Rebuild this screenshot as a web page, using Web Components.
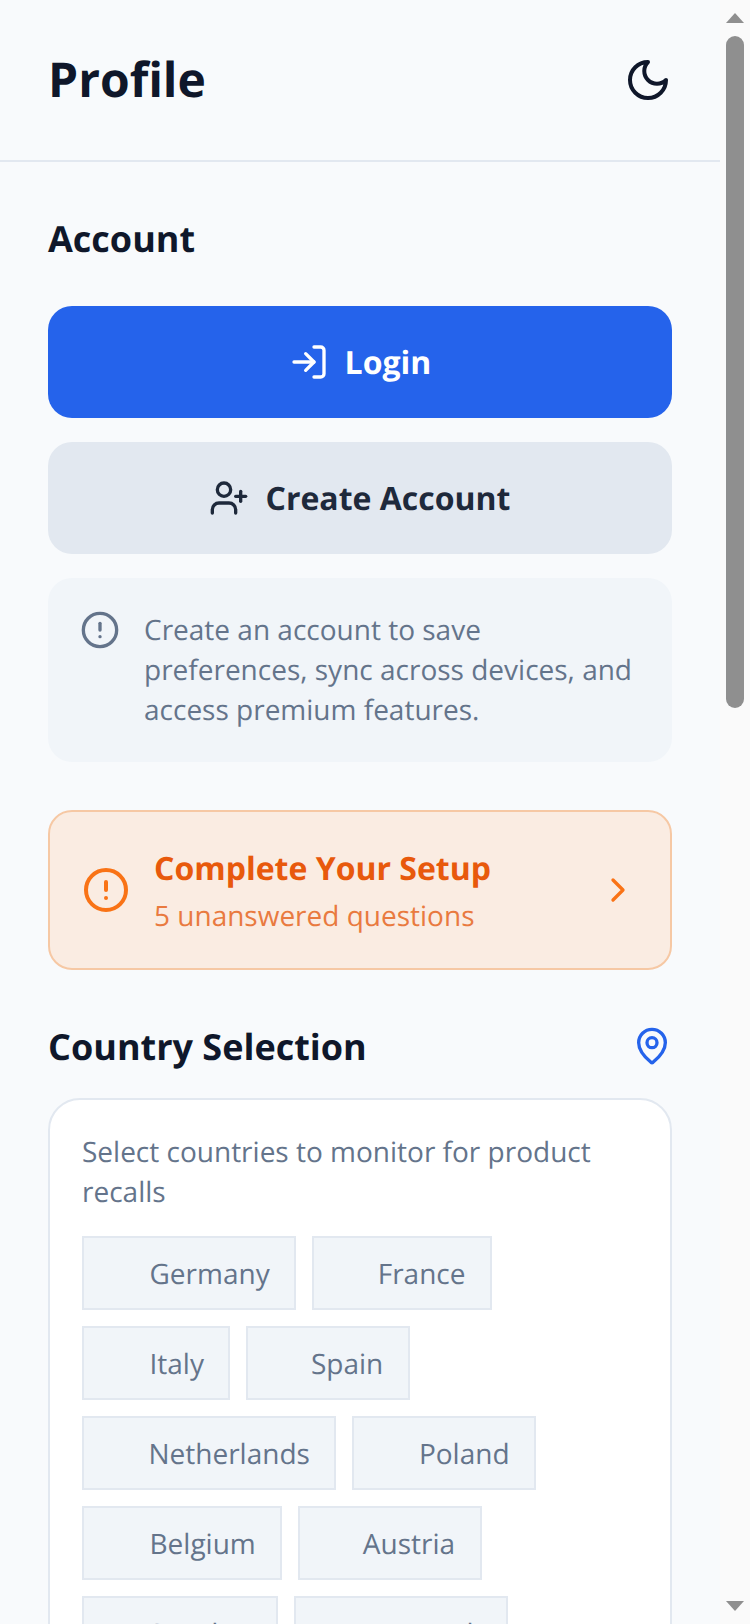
<!DOCTYPE html>
<html>
<head>
<meta charset="utf-8">
<title>Profile</title>
<style>
  html, body { margin: 0; height: 100%; overflow: hidden; }
  body { font-family: "Open Sans", "Liberation Sans", sans-serif; background: #f8fafc; text-rendering: geometricPrecision; }
</style>
</head>
<body>
<app-shell>
  <app-header title="Profile"></app-header>
  <section-title>Account</section-title>
  <action-button kind="primary" icon="login">Login</action-button>
  <action-button kind="secondary" icon="user-plus">Create Account</action-button>
  <info-note>Create an account to save preferences, sync across devices, and access premium features.</info-note>
  <setup-banner heading="Complete Your Setup" sub="5 unanswered questions"></setup-banner>
  <section-title pin>Country Selection</section-title>
  <country-card hint="Select countries to monitor for product recalls">
    <country-chip flag="65.5">Germany</country-chip>
    <country-chip flag="63.5">France</country-chip>
    <country-chip flag="65.5">Italy</country-chip>
    <country-chip flag="62.5">Spain</country-chip>
    <country-chip flag="64.5">Netherlands</country-chip>
    <country-chip flag="64.5">Poland</country-chip>
    <country-chip flag="65.5">Belgium</country-chip>
    <country-chip flag="62.5">Austria</country-chip>
    <country-chip flag="64.5">Sweden</country-chip>
    <country-chip flag="64.5">Denmark</country-chip>
  </country-card>
</app-shell>

<script>
const ICONS = {
  login: '<path d="M15 3h4a2 2 0 0 1 2 2v14a2 2 0 0 1-2 2h-4"/><polyline points="10 17 15 12 10 7"/><line x1="15" y1="12" x2="3" y2="12"/>',
  'user-plus': '<path d="M16 21v-2a4 4 0 0 0-4-4H6a4 4 0 0 0-4 4v2"/><circle cx="9" cy="7" r="4"/><line x1="19" y1="8" x2="19" y2="14"/><line x1="22" y1="11" x2="16" y2="11"/>',
  alert: '<circle cx="12" cy="12" r="10"/><line x1="12" y1="8" x2="12" y2="12"/><line x1="12" y1="16" x2="12.01" y2="16"/>',
  moon: '<path d="M12 3a6 6 0 0 0 9 9 9 9 0 1 1-9-9Z"/>',
  chevron: '<path d="m9 18 6-6-6-6"/>',
  pin: '<path d="M20 10c0 5-5.5 10.2-7.4 11.8a1 1 0 0 1-1.2 0C9.5 20.2 4 15 4 10a8 8 0 0 1 16 0"/><circle cx="12" cy="10" r="3"/>'
};

function icon(name, size) {
  return `<svg width="${size}" height="${size}" viewBox="0 0 24 24" fill="none" stroke="currentColor" stroke-width="2" stroke-linecap="round" stroke-linejoin="round">${ICONS[name]}</svg>`;
}

class AppShell extends HTMLElement {
  constructor() {
    super();
    this.attachShadow({ mode: 'open' });
  }

  connectedCallback() {
    this.shadowRoot.innerHTML = `
      <style>
        :host { display: flex; height: 100%; }
        .page { flex: 1; min-width: 0; overflow: hidden; }
        .bar {
          width: 30px;
          flex: none;
          background: #fafafa;
          display: flex;
          flex-direction: column;
          align-items: center;
          padding: 13px 0;
          box-sizing: border-box;
        }
        .tri { width: 18px; height: 10px; background: #8f8f8f; flex: none; }
        .up { clip-path: polygon(50% 0, 100% 100%, 0 100%); }
        .down { clip-path: polygon(0 0, 100% 0, 50% 100%); margin-top: auto; }
        .thumb { width: 18px; height: 672px; margin-top: 13px; background: #8f8f8f; border-radius: 9px; flex: none; }
      </style>
      <div class="page"><slot></slot></div>
      <div class="bar">
        <div class="tri up"></div>
        <div class="thumb"></div>
        <div class="tri down"></div>
      </div>
    `;
  }
}

class AppHeader extends HTMLElement {
  constructor() {
    super();
    this.attachShadow({ mode: 'open' });
  }

  connectedCallback() {
    this.shadowRoot.innerHTML = `
      <style>
        :host { display: block; }
        .head {
          height: 160px;
          box-sizing: content-box;
          border-bottom: 2px solid #e2e8f0;
          padding: 0 48px;
          display: flex;
          align-items: center;
          justify-content: space-between;
        }
        h1 { margin: 0; font-size: 48px; line-height: 64px; font-weight: 700; color: #0f172a; }
        svg { display: block; color: #0f172a; }
      </style>
      <div class="head">
        <h1>${this.getAttribute('title')}</h1>
        ${icon('moon', 48)}
      </div>
    `;
  }
}

class SectionTitle extends HTMLElement {
  constructor() {
    super();
    this.attachShadow({ mode: 'open' });
  }

  connectedCallback() {
    const pin = this.hasAttribute('pin');
    this.shadowRoot.innerHTML = `
      <style>
        :host { display: block; margin: 0 48px; }
        .row {
          display: flex;
          align-items: center;
          justify-content: space-between;
          height: 48px;
          font-size: 36px;
          font-weight: 700;
          color: #0f172a;
          padding-top: ${pin ? 4 : 52}px;
          padding-bottom: ${pin ? 28 : 44}px;
        }
        svg { color: #2563eb; display: block; }
      </style>
      <div class="row"><span><slot></slot></span>${pin ? icon('pin', 40) : ''}</div>
    `;
  }
}

class ActionButton extends HTMLElement {
  constructor() {
    super();
    this.attachShadow({ mode: 'open' });
  }

  connectedCallback() {
    const primary = this.getAttribute('kind') === 'primary';
    this.shadowRoot.innerHTML = `
      <style>
        :host { display: block; margin: 0 48px 24px; }
        button {
          width: 100%;
          height: 112px;
          border: 0;
          border-radius: 24px;
          background: ${primary ? '#2563eb' : '#e2e8f0'};
          color: ${primary ? '#fff' : '#1e293b'};
          font: 700 32px "Open Sans", sans-serif;
          text-rendering: inherit;
          display: flex;
          align-items: center;
          justify-content: center;
          gap: 16px;
          padding: 0;
        }
        svg { display: block; }
      </style>
      <button>${icon(this.getAttribute('icon'), 40)}<slot></slot></button>
    `;
  }
}

class InfoNote extends HTMLElement {
  constructor() {
    super();
    this.attachShadow({ mode: 'open' });
  }

  connectedCallback() {
    this.shadowRoot.innerHTML = `
      <style>
        :host {
          display: flex;
          gap: 24px;
          margin: 0 48px 48px;
          padding: 32px;
          background: #f1f5f9;
          border-radius: 24px;
          color: #64748b;
          font-size: 28px;
          line-height: 40px;
        }
        svg { display: block; flex: none; }
      </style>
      ${icon('alert', 40)}
      <div><slot></slot></div>
    `;
  }
}

class SetupBanner extends HTMLElement {
  constructor() {
    super();
    this.attachShadow({ mode: 'open' });
  }

  connectedCallback() {
    this.shadowRoot.innerHTML = `
      <style>
        :host {
          display: flex;
          align-items: center;
          gap: 24px;
          margin: 0 48px 48px;
          height: 160px;
          box-sizing: border-box;
          padding: 0 32px;
          background: #faece2;
          border: 2px solid #f6c8a4;
          border-radius: 24px;
        }
        svg { display: block; flex: none; color: #f97316; }
        .text { flex: 1; padding-top: 3px; }
        .h { font-size: 32px; line-height: 44px; font-weight: 700; color: #e8590c; }
        .s { font-size: 28px; line-height: 40px; color: #e97a3f; margin-top: 5px; }
      </style>
      ${icon('alert', 48)}
      <div class="text">
        <div class="h">${this.getAttribute('heading')}</div>
        <div class="s">${this.getAttribute('sub')}</div>
      </div>
      ${icon('chevron', 40)}
    `;
  }
}

class CountryCard extends HTMLElement {
  constructor() {
    super();
    this.attachShadow({ mode: 'open' });
  }

  connectedCallback() {
    this.shadowRoot.innerHTML = `
      <style>
        :host {
          display: block;
          margin: 0 48px;
          padding: 32px;
          background: #fff;
          border: 2px solid #e2e8f0;
          border-radius: 32px;
        }
        p { margin: 0 0 24px; font-size: 28px; line-height: 40px; color: #64748b; }
        .chips { display: flex; flex-wrap: wrap; gap: 16px; }
      </style>
      <p>${this.getAttribute('hint')}</p>
      <div class="chips"><slot></slot></div>
    `;
  }
}

class CountryChip extends HTMLElement {
  constructor() {
    super();
    this.attachShadow({ mode: 'open' });
  }

  connectedCallback() {
    // the flag emoji has no glyph here, it only leaves a gap before the name
    const flag = this.getAttribute('flag') || 64;
    this.shadowRoot.innerHTML = `
      <style>
        :host {
          display: block;
          height: 74px;
          box-sizing: border-box;
          padding: 0 24.5px 0 ${flag}px;
          background: #f1f5f9;
          border: 2px solid #e2e8f0;
          color: #64748b;
          font-size: 28px;
          line-height: 72px;
        }
      </style>
      <slot></slot>
    `;
  }
}

customElements.define('app-shell', AppShell);
customElements.define('app-header', AppHeader);
customElements.define('section-title', SectionTitle);
customElements.define('action-button', ActionButton);
customElements.define('info-note', InfoNote);
customElements.define('setup-banner', SetupBanner);
customElements.define('country-card', CountryCard);
customElements.define('country-chip', CountryChip);
</script>
</body>
</html>
